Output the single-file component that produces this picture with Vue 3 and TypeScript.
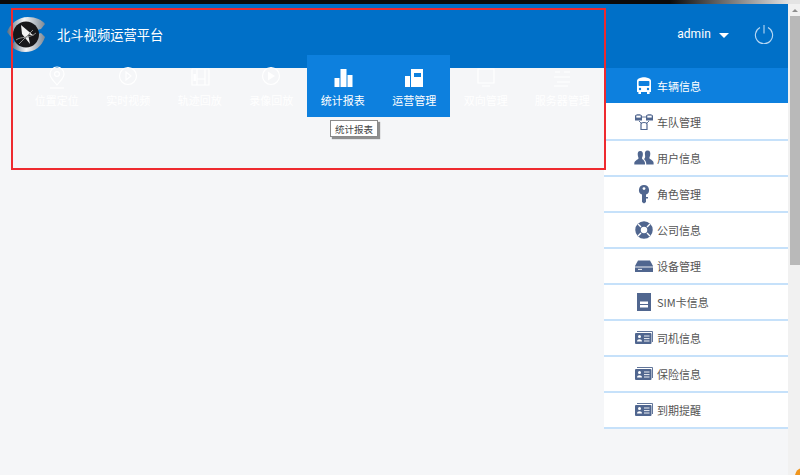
<script setup lang="ts">
const navItems = [
  { label: '位置定位', icon: 'pin', active: false },
  { label: '实时视频', icon: 'play', active: false },
  { label: '轨迹回放', icon: 'track', active: false },
  { label: '录像回放', icon: 'video', active: false },
  { label: '统计报表', icon: 'bars', active: true },
  { label: '运营管理', icon: 'ops', active: true },
  { label: '双向管理', icon: 'screen', active: false },
  { label: '服务器管理', icon: 'server', active: false },
]
const sideItems = [
  { label: '车辆信息', icon: 'bus' },
  { label: '车队管理', icon: 'fleet' },
  { label: '用户信息', icon: 'users' },
  { label: '角色管理', icon: 'key' },
  { label: '公司信息', icon: 'ring' },
  { label: '设备管理', icon: 'device' },
  { label: 'SIM卡信息', icon: 'sim' },
  { label: '司机信息', icon: 'card' },
  { label: '保险信息', icon: 'card' },
  { label: '到期提醒', icon: 'card' },
]
</script>

<template>
  <div class="page">
    <div class="main">
      <div class="topline"></div>
      <header class="header">
        <div class="brand">
          <svg class="logo" width="42" height="42" viewBox="0 0 42 42">
            <defs>
              <linearGradient id="silver" x1="0" y1="0" x2="1" y2="0">
                <stop offset="0" stop-color="#5b6d80" />
                <stop offset="0.45" stop-color="#f4f5f7" />
                <stop offset="1" stop-color="#7d8894" />
              </linearGradient>
            </defs>
            <path d="M0 19 C3 11 11 4 21 4 C29 4 35 7 38 11 L34 16 L4 24Z" fill="url(#silver)" />
            <path d="M38 24 C35 33 28 39 18 39 C13 39 8 37 4 33 L8 28 L34 20Z" fill="url(#silver)" />
            <circle cx="19" cy="21.5" r="13" fill="#17171a" />
            <path d="M14 12 L27 23 L21 21 L23 31 L15 21Z" fill="#f2f2f2" />
            <path d="M9 27 C14 23 22 26 29 20 M12 31 L26 17" stroke="#8c8c8c" stroke-width="1" fill="none" />
          </svg>
          <h1 class="title">北斗视频运营平台</h1>
        </div>
        <div class="user">
          <span class="name">admin</span>
          <span class="caret"></span>
          <svg class="power" width="20" height="20" viewBox="0 0 20 20" fill="none" stroke="#b9d8f3" stroke-width="1.1">
            <path d="M6 3.6 A8.6 8.6 0 1 0 14 3.6" />
            <path d="M10 1 V9.5" />
          </svg>
        </div>
      </header>
      <div class="body">
        <div class="content">
          <nav class="nav">
            <div v-for="item in navItems" :key="item.label" class="nav-item" :class="{ active: item.active }">
              <svg class="nav-icon" width="24" height="24" viewBox="0 0 24 24">
                <g v-if="item.icon === 'pin'" fill="none" stroke="#fff" stroke-width="1.2">
                  <path d="M12 19 C8 14 5 12 5 8 A7 7 0 0 1 19 8 C19 12 16 14 12 19Z" />
                  <circle cx="12" cy="8" r="2.4" />
                  <path d="M5 22 H19" />
                </g>
                <g v-else-if="item.icon === 'play'" fill="none" stroke="#fff" stroke-width="1.2">
                  <circle cx="12" cy="10" r="8.5" />
                  <path d="M10 6 L15 10 L10 14Z" />
                </g>
                <g v-else-if="item.icon === 'track'" fill="none" stroke="#fff" stroke-width="1.2">
                  <path d="M4 3 V19 H21 V3 H4 M9 3 V19 M17 3 V19 M9 13 H17" />
                  <rect x="5.5" y="8" width="2.4" height="7" fill="#fff" stroke="none" />
                </g>
                <g v-else-if="item.icon === 'video'">
                  <circle cx="12" cy="10" r="8.5" fill="none" stroke="#fff" stroke-width="1.2" />
                  <path d="M9 5.5 L16 10 L9 14.5Z" fill="#fff" />
                </g>
                <g v-else-if="item.icon === 'bars'" fill="#fff">
                  <rect x="3.5" y="12" width="5" height="9" />
                  <rect x="9.5" y="3" width="6" height="18" />
                  <rect x="16.5" y="9" width="5" height="12" />
                </g>
                <g v-else-if="item.icon === 'ops'">
                  <rect x="3" y="10" width="5" height="11" fill="#fff" />
                  <path d="M9 3 H21 V21 H9Z" fill="#fff" />
                  <rect x="12" y="7" width="7" height="4" fill="#0d80de" />
                </g>
                <g v-else-if="item.icon === 'screen'" fill="none" stroke="#fff" stroke-width="1.2">
                  <path d="M4 3 H20 V17 H4Z M8 20 H16" />
                </g>
                <g v-else fill="none" stroke="#fff" stroke-width="1.2">
                  <path d="M5 6 H10 M14 6 H20 M4 11 H20 M7 16 H20 M4 20 H18" />
                </g>
              </svg>
              <span class="nav-label">{{ item.label }}</span>
            </div>
            <div class="tooltip">统计报表</div>
          </nav>
        </div>
        <aside class="side">
          <div v-for="(item, i) in sideItems" :key="item.label" class="side-item" :class="{ first: i === 0 }">
            <svg class="side-icon" width="20" height="20" viewBox="0 0 20 20">
              <g v-if="item.icon === 'bus'" fill="#fff">
                <path d="M6 2 C8 1 12 1 14 2 C16 2.6 17 3.5 17 5 V16 H15.6 V18 H13 V16 H7 V18 H4.4 V16 H3 V5 C3 3.5 4 2.6 6 2Z" />
                <rect x="4.6" y="5" width="10.8" height="5" rx="0.8" fill="#0d80de" />
                <circle cx="6" cy="13" r="1.2" fill="#0d80de" />
                <circle cx="14" cy="13" r="1.2" fill="#0d80de" />
              </g>
              <g v-else-if="item.icon === 'fleet'" fill="#50668f">
                <path d="M1 4 C1 1.5 8 1.5 8 4 V8.5 H1Z M12 4 C12 1.5 19 1.5 19 4 V8.5 H12Z" />
                <path d="M7 12 C7 10 13 10 13 12 V17.5 H7Z" fill="none" stroke="#50668f" stroke-width="1.2" />
                <path d="M8 5 H12 M5 9 L8 12 M15 9 L12 12" stroke="#50668f" stroke-width="0.9" fill="none" />
                <rect x="2.3" y="3.6" width="4.4" height="2" fill="#fff" />
                <rect x="13.3" y="3.6" width="4.4" height="2" fill="#fff" />
              </g>
              <g v-else-if="item.icon === 'users'" fill="#50668f">
                <path d="M6.3 3 C8.5 3 9.2 5 8.8 7.3 C8.6 8.6 8 9.5 8 10.2 C8 11.5 11 12 11 15.5 V16.5 H0.3 V14.8 C0.7 12.3 4.5 11.5 4.5 10.2 C4.5 9.5 4 8.6 3.8 7.3 C3.4 5 4 3 6.3 3Z" />
                <path d="M13.6 2.5 C16 2.5 16.6 4.5 16.2 7 C16 8.3 15.4 9.3 15.4 10 C15.4 11.3 19.3 12 19.6 14.8 V16.5 H12.2 V15 C12 12.5 9.8 11.5 10.2 10.7 C11 10.3 11.4 9 11 7 C10.6 4.5 11.2 2.5 13.6 2.5Z" />
              </g>
              <g v-else-if="item.icon === 'key'" fill="#50668f">
                <path d="M10 1 A5 5 0 0 1 12 10.6 V18 L10 19.5 L8 18 V10.6 A5 5 0 0 1 10 1Z" />
                <circle cx="10" cy="4.6" r="1.4" fill="#fff" />
                <path d="M12 13 H14 V14.5 H12Z" />
              </g>
              <g v-else-if="item.icon === 'ring'">
                <circle cx="10" cy="10" r="6" fill="none" stroke="#50668f" stroke-width="5.5" />
                <path d="M4 4 L7 7 M16 4 L13 7 M4 16 L7 13 M16 16 L13 13" stroke="#fff" stroke-width="1.4" />
              </g>
              <g v-else-if="item.icon === 'device'" fill="#50668f">
                <path d="M4 4.5 H16 L19 10 V16 H1 V10Z" />
                <path d="M1 11 H19 M4 13.4 H8" stroke="#fff" stroke-width="0.9" />
              </g>
              <g v-else-if="item.icon === 'sim'" fill="#50668f">
                <path d="M3 1 H17 V19 H3Z" />
                <rect x="6" y="9.5" width="8" height="6" fill="#fff" />
                <rect x="6" y="12" width="8" height="1" fill="#50668f" />
              </g>
              <g v-else>
                <path d="M3 3.5 H18.5 V14" fill="none" stroke="#50668f" stroke-width="0.9" />
                <rect x="1" y="5" width="16.5" height="11" rx="1" fill="#50668f" />
                <circle cx="5.5" cy="8.6" r="1.5" fill="#fff" />
                <path d="M3 13.6 C3 10.6 8 10.6 8 13.6Z" fill="#fff" />
                <path d="M10 8 H15.5 M10 10.6 H15.5 M10 13 H15.5" stroke="#fff" stroke-width="0.9" />
              </g>
            </svg>
            <span class="side-label">{{ item.label }}</span>
          </div>
        </aside>
      </div>
    </div>
    <div class="scrollbar">
      <div class="sb-btn"><span class="sb-arrow"></span></div>
      <div class="sb-thumb"></div>
    </div>
    <div class="topfade"></div>
    <div class="highlight"></div>
    <div class="corner"></div>
  </div>
</template>

<style scoped>
.page {
  position: relative;
  display: flex;
  width: 800px;
  height: 475px;
  overflow: hidden;
  background: #f5f6f8;
  font-family: "Noto Sans CJK SC", "Noto Sans", sans-serif;
}
.main {
  flex: 1;
  min-width: 0;
  display: flex;
  flex-direction: column;
}
.topline {
  height: 4px;
}
.topfade {
  position: absolute;
  left: 0;
  top: 0;
  width: 800px;
  height: 4px;
  background: linear-gradient(90deg, #0b0b0b 0, #0b0b0b 670px, #e4e4e4 790px);
}
.header {
  height: 64px;
  display: flex;
  align-items: center;
  justify-content: space-between;
  padding: 0 14px 0 7px;
  background: #0070c8;
}
.brand {
  display: flex;
  align-items: center;
  gap: 8px;
  margin-top: -4px;
}
.title {
  margin: 0;
  font-size: 13.3px;
  font-weight: 400;
  color: #fff;
}
.user {
  display: flex;
  align-items: center;
  color: #fff;
  margin-top: -4px;
}
.name {
  font-family: Roboto, sans-serif;
  font-size: 12px;
  line-height: 20px;
  letter-spacing: 0.1px;
}
.caret {
  width: 0;
  height: 0;
  margin: 2px 0 0 8px;
  border-left: 5px solid transparent;
  border-right: 5px solid transparent;
  border-top: 5px solid #fff;
}
.power {
  margin-left: 25px;
}
.body {
  flex: 1;
  display: flex;
}
.content {
  flex: 1;
  min-width: 0;
}
.nav {
  position: relative;
  display: flex;
  margin: -13px 0 0 21px;
}
.nav-item {
  width: 71.5px;
  height: 62px;
  flex: none;
  display: flex;
  flex-direction: column;
  align-items: center;
  padding-top: 11px;
  box-sizing: border-box;
  color: #fff;
}
.nav-item:nth-child(8) {
  margin-left: 5px;
}
.nav-item.active {
  background: #0d80de;
}
.nav-label {
  margin-top: 2px;
  font-size: 11px;
  line-height: 16px;
  white-space: nowrap;
}
.tooltip {
  position: absolute;
  left: 309px;
  top: 65px;
  padding: 1px 4px 0;
  height: 17px;
  box-sizing: border-box;
  border: 1px solid #8a8a8a;
  background: #fff;
  box-shadow: 2px 2px 1px #8f8f8f;
  color: #444;
  font-size: 9.5px;
  line-height: 14px;
  white-space: nowrap;
}
.side {
  width: 184px;
  flex: none;
  align-self: flex-start;
  background: #fff;
}
.side-item {
  height: 36px;
  box-sizing: border-box;
  display: flex;
  align-items: center;
  padding-left: 30px;
  background: #fff;
  border-bottom: 2px solid #c6e1fa;
  color: #555;
}
.side-item.first {
  height: 35px;
  margin-bottom: 2px;
  background: #0d80de;
  border-bottom: none;
  color: #fff;
}
.side-icon {
  flex: none;
}
.side-label {
  margin-left: 3px;
  font-size: 11px;
  line-height: 16px;
}
.scrollbar {
  width: 12px;
  flex: none;
  box-sizing: border-box;
  padding: 4px 0 0 2px;
  background: #f1f1f1;
}
.sb-btn {
  height: 12px;
  display: flex;
  align-items: center;
  justify-content: center;
}
.sb-arrow {
  width: 0;
  height: 0;
  border-left: 3px solid transparent;
  border-right: 3px solid transparent;
  border-bottom: 3px solid #8f8f8f;
}
.sb-thumb {
  height: 249px;
  background: #b9b9b9;
}
.highlight {
  position: absolute;
  left: 11px;
  top: 8px;
  width: 595px;
  height: 162px;
  box-sizing: border-box;
  border: 2px solid #ee2a2f;
  pointer-events: none;
}
.corner {
  position: absolute;
  left: 795px;
  top: 468px;
  width: 16px;
  height: 16px;
  border-radius: 50%;
  background: #f0961e;
}
</style>

<style>
html, body {
  margin: 0;
  overflow: hidden;
}
</style>
